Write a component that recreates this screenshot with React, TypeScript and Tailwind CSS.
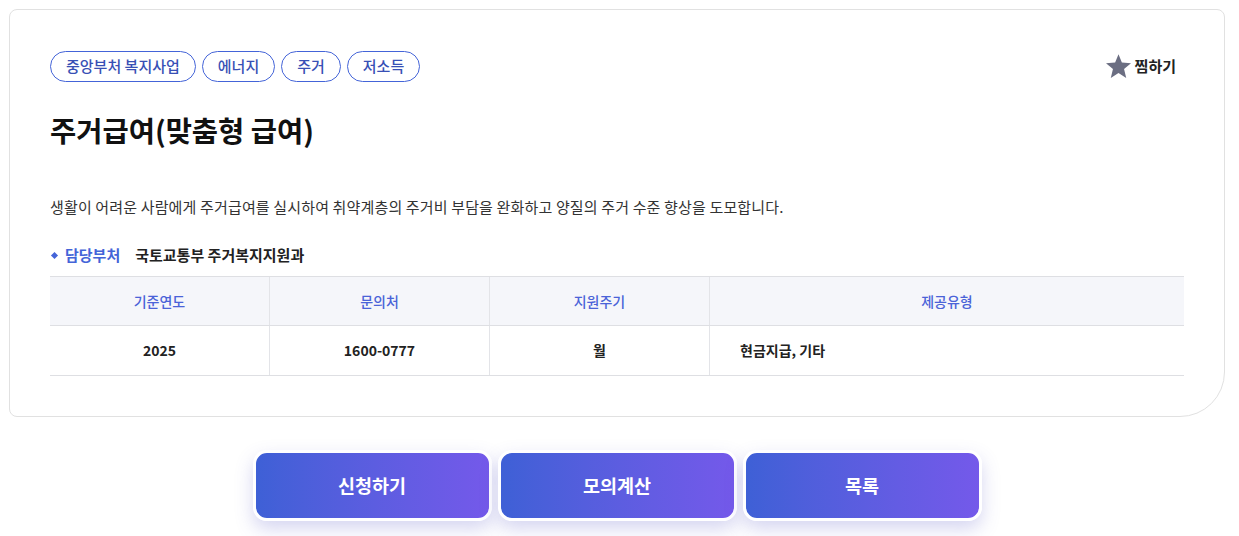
import { useState } from 'react';

const tags = ['중앙부처 복지사업', '에너지', '주거', '저소득'];

const columns = [
  { label: '기준연도', value: '2025', w: 'w-[220px]' },
  { label: '문의처', value: '1600-0777', w: 'w-[220px]' },
  { label: '지원주기', value: '월', w: 'w-[220px]' },
  { label: '제공유형', value: '현금지급, 기타', w: 'flex-1' },
];

function StarIcon() {
  return (
    <svg width="27" height="25" viewBox="0 0 24 23" className="fill-[#6b6e82]">
      <path d="M12 0.3l3.1 7.6 8.4 0.6-6.4 5.4 2 8.1-7.1-4.5-7.1 4.5 2-8.1-6.4-5.4 8.4-0.6z" />
    </svg>
  );
}

export default function App() {
  const [liked, setLiked] = useState(false);

  return (
    <div className="bg-white min-h-[536px] pt-[9px] font-['Noto_Sans_CJK_KR','Noto_Sans',sans-serif]">
      <div className="ml-[9px] w-[1216px] border border-[#e1e1e1] rounded-tl-[8px] rounded-tr-[8px] rounded-bl-[8px] rounded-br-[45px] px-10 pt-[41px] pb-10">
        <div className="flex items-start justify-between">
          <div className="flex gap-[6px]">
            {tags.map((t) => (
              <span
                key={t}
                className="h-[31px] px-[15px] flex items-center rounded-full border border-[#4464d8] text-[15px] font-medium text-[#3850b5]"
              >
                {t}
              </span>
            ))}
          </div>
          <button
            onClick={() => setLiked(!liked)}
            className="flex items-center gap-[3px] mt-[3px] mr-[8px] text-[15px] font-bold text-[#222]"
          >
            <StarIcon />
            찜하기
          </button>
        </div>

        <h1 className="mt-[28px] text-[28.5px] leading-[40px] font-bold text-[#111]">
          주거급여(맞춤형 급여)
        </h1>

        <p className="mt-[46px] text-[15px] leading-[22px] tracking-[0.15px] text-[#333]">
          생활이 어려운 사람에게 주거급여를 실시하여 취약계층의 주거비 부담을 완화하고 양질의 주거 수준 향상을 도모합니다.
        </p>

        <div className="mt-[26px] flex items-center text-[15px] leading-[22px]">
          <span className="ml-[2px] w-[5px] h-[5px] bg-[#4464d8] rotate-45" />
          <span className="ml-[8px] font-bold text-[#4464d8]">담당부처</span>
          <span className="ml-[15px] font-bold text-[#222]">국토교통부 주거복지지원과</span>
        </div>

        <div className="mt-[10px] border-t border-b border-[#dedfe3]">
          <div className="flex bg-[#f5f6fa] border-b border-[#dedfe3]">
            {columns.map((c, i) => (
              <div
                key={c.label}
                className={`${c.w} h-[48px] flex items-center justify-center text-[14px] font-medium text-[#4a63d8] ${i < 3 ? 'border-r border-[#e3e4e8]' : ''}`}
              >
                {c.label}
              </div>
            ))}
          </div>
          <div className="flex">
            {columns.map((c, i) => (
              <div
                key={c.label}
                className={`${c.w} h-[49px] flex items-center ${i < 3 ? 'justify-center border-r border-[#e3e4e8]' : 'pl-[30px]'} text-[14px] font-bold text-[#222]`}
              >
                {c.value}
              </div>
            ))}
          </div>
        </div>
      </div>

      <div className="mt-[33px] flex justify-center gap-[6px] pr-[5px]">
        {['신청하기', '모의계산', '목록'].map((b) => (
          <button
            key={b}
            className="w-[239px] h-[71px] rounded-[14px] border-[3px] border-white bg-gradient-to-r from-[#3e60d6] to-[#7459ea] text-white text-[18.5px] font-bold shadow-[0_8px_18px_rgba(90,90,200,0.25)]"
          >
            {b}
          </button>
        ))}
      </div>
    </div>
  );
}
